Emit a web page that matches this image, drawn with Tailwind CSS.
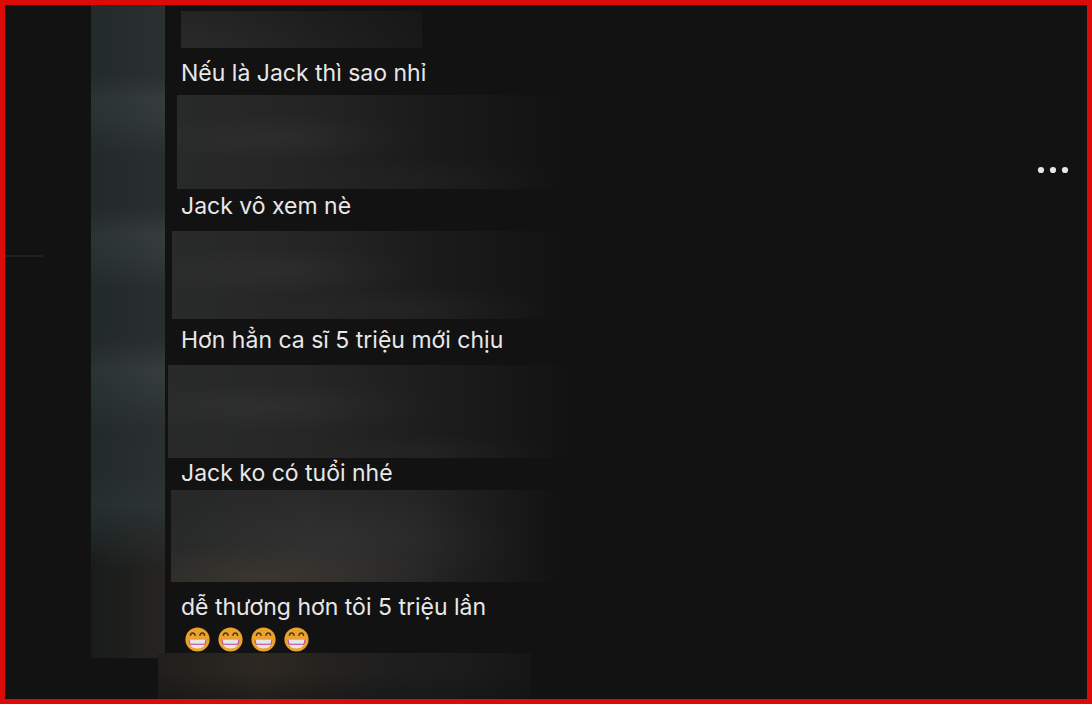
<!DOCTYPE html>
<html lang="vi">
  <head>
    <meta charset="UTF-8" />
    <meta name="viewport" content="width=device-width, initial-scale=1.0" />
    <title>Bình luận</title>
    <script src="https://cdn.jsdelivr.net/npm/@tailwindcss/browser@4"></script>
  </head>
  <body class="bg-[#121212] font-['Inter','Noto_Sans',sans-serif] text-[#e8e8e8]">
    <!-- Biểu tượng dùng chung -->
    <svg class="hidden" aria-hidden="true">
      <symbol id="grin" viewBox="0 0 24 24">
        <circle cx="12" cy="12" r="11.6" fill="#eba32b" />
        <path d="M5.200 8c.3-3 4-3 4.500 0M14.300 8c.5-3 4.200-3 4.500 0" fill="none" stroke="#53351b" stroke-width="1.400" stroke-linecap="round" />
        <path d="M3.600 11.800h16.800c0 5.700-3.100 8.900-8.400 8.900s-8.400-3.200-8.400-8.900z" fill="#e9e4e8" />
        <path d="M3.900 12c.1 2 .4 3.300 1.100 4.600h14c.7-1.300 1-2.600 1.100-4.600" fill="none" stroke="#b8438c" stroke-width="1" />
        <path d="M4 11.700h16" stroke="#d58d72" stroke-width=".7" />
      </symbol>
    </svg>

    <div class="flex min-h-screen border-5 border-[#dd0a0a]">
      <!-- Lề trái -->
      <div class="w-[86px] shrink-0 pt-[250px]">
        <hr class="w-[38px] border-t-2 border-[#202020]" />
      </div>

      <!-- Cột ảnh đại diện đã che -->
      <div class="mb-[41px] flex w-[74px] shrink-0 flex-col">
        <div class="h-[515px] bg-[linear-gradient(to_right,#12201e50,#12201e00),linear-gradient(to_bottom,#2b3030_0px,#2b3030_70px,#363d3c_95px,#333a39_115px,#2a2e2e_150px,#2a2e2e_203px,#363d3c_230px,#333a39_250px,#292e2e_285px,#2a2e2e_335px,#363d3c_365px,#323939_385px,#2a2f2f_425px,#2b3030_470px,#2e3435_500px,#2a2f2f_515px)]"></div>
        <div class="flex-1 bg-[linear-gradient(to_right,#12201e50,#12201e00),linear-gradient(to_bottom,#2a2f2f,#2a2f2f00_50px),linear-gradient(to_right,#191918,#1e1d1b_25%,#23211f_60%,#272422)]"></div>
      </div>

      <!-- Bình luận -->
      <main class="flex min-w-0 flex-1 flex-col pt-[6px] text-[23px] leading-7">
        <div class="ml-4 h-[37px] w-[241px] bg-[linear-gradient(to_bottom,#12121240,#12121200),linear-gradient(to_right,#292b2a,#262626_30%,#202020_60%,#191919)]"></div>
        <p class="mt-[11px] px-4">Nếu là Jack thì sao nhỉ</p>

        <div class="mt-2 ml-3 h-[94px] w-[390px] max-w-full bg-[radial-gradient(ellipse_150px_24px_at_27%_45%,#ffffff08,#ffffff00),radial-gradient(ellipse_130px_24px_at_66%_90%,#ffffff06,#ffffff00),linear-gradient(to_right,#282a29,#242424_35%,#1a1a1a_65%,#121212)]"></div>
        <p class="mt-[3px] px-4">Jack vô xem nè</p>

        <div class="mt-[11px] ml-[7px] h-[88px] w-[400px] max-w-full bg-[radial-gradient(ellipse_150px_24px_at_27%_45%,#ffffff08,#ffffff00),radial-gradient(ellipse_140px_24px_at_62%_90%,#ffffff08,#ffffff00),linear-gradient(to_right,#292b2a,#252525_35%,#1b1b1b_65%,#121212)]"></div>
        <p class="mt-[7px] px-4">Hơn hẳn ca sĩ 5 triệu mới chịu</p>

        <div class="mt-[11px] ml-[3px] h-[93px] w-[407px] max-w-full bg-[radial-gradient(ellipse_170px_24px_at_27%_45%,#ffffff08,#ffffff00),radial-gradient(ellipse_130px_20px_at_66%_95%,#ffffff06,#ffffff00),linear-gradient(to_right,#292b2a,#262626_35%,#1d1d1d_65%,#121212)]"></div>
        <p class="mt-px px-4">Jack ko có tuổi nhé</p>

        <div class="mt-[3px] ml-[6px] h-[92px] w-[390px] max-w-full bg-[radial-gradient(ellipse_180px_34px_at_23%_95%,#4a403480,#4a403400),radial-gradient(ellipse_190px_50px_at_42%_55%,#ffffff0a,#ffffff00),linear-gradient(to_right,#272928,#292929_35%,#252525_63%,#1b1b1b_83%,#121212)]"></div>
        <p class="mt-[11px] px-4">dễ thương hơn tôi 5 triệu lần</p>
        <div class="flex h-8 items-end gap-2 px-5 pb-px">
          <svg class="size-[25px]" role="img" aria-label="😁"><use href="#grin" /></svg>
          <svg class="size-[25px]" role="img" aria-label="😁"><use href="#grin" /></svg>
          <svg class="size-[25px]" role="img" aria-label="😁"><use href="#grin" /></svg>
          <svg class="size-[25px]" role="img" aria-label="😁"><use href="#grin" /></svg>
        </div>

        <div class="-ml-[7px] min-h-[46px] w-[373px] max-w-full flex-1 bg-[linear-gradient(to_bottom,#12121200_40%,#12121270),linear-gradient(to_right,#211f1c,#2d2822_28%,#26231f_42%,#1f1f1f_60%,#1c1c1c_80%,#161616)]"></div>
      </main>

      <!-- Nút tùy chọn -->
      <div class="shrink-0 pt-[153px] pr-[18px]">
        <button type="button" aria-label="Tùy chọn" class="block cursor-pointer py-2">
          <svg class="h-2 w-8" viewBox="0 0 32 8" fill="#e6e6e6">
            <circle cx="4" cy="4" r="3.100" />
            <circle cx="16" cy="4" r="3.100" />
            <circle cx="28" cy="4" r="3.100" />
          </svg>
        </button>
      </div>
    </div>
  </body>
</html>
